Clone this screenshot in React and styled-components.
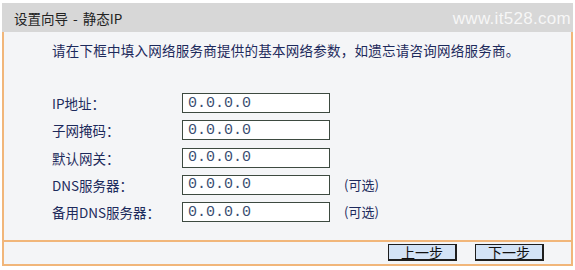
import { Fragment } from "react";
import styled, { createGlobalStyle } from "styled-components";

const GlobalStyle = createGlobalStyle`
  html, body {
    margin: 0;
    padding: 0;
    background: #ffffff;
  }
  body {
    font-family: "Noto Sans CJK SC", "Liberation Sans", sans-serif;
  }
`;

const Frame = styled.div`
  width: 571px;
  margin: 3px 0 0 2px;
`;

const Header = styled.div`
  height: 29px;
  background: #d7d7d7;
  display: flex;
  align-items: center;
  justify-content: space-between;
  padding: 0 2px 0 12px;
`;

const Title = styled.div`
  font-size: 13.5px;
  color: #222;
  line-height: 16px;
  word-spacing: 2px;
`;

const Watermark = styled.div`
  font-family: "Liberation Sans", Arial, sans-serif;
  font-size: 17px;
  color: #f6f6f6;
  letter-spacing: 0.3px;
  margin-top: 3px;
`;

const Body = styled.div`
  background: #f4f5f7;
  border: 2px solid #f1b67a;
  border-top: none;
`;

const Content = styled.div`
  height: 208px;
  padding: 10px 0 0 48px;
  box-sizing: border-box;
`;

const Intro = styled.div`
  font-size: 13.5px;
  line-height: 16px;
  letter-spacing: 0.25px;
  color: #1d2a5c;
`;

const Form = styled.div`
  display: grid;
  grid-template-columns: 130px 148px auto;
  grid-auto-rows: 20px;
  row-gap: 7.3px;
  align-items: center;
  margin-top: 35px;
`;

const Label = styled.div`
  font-size: 13.5px;
  color: #1d2a5c;
  line-height: 16px;
`;

const Field = styled.input`
  box-sizing: border-box;
  width: 148px;
  height: 20px;
  border: 1px solid #3d4a40;
  background: #ffffff;
  padding: 0 0 0 5px;
  font-family: "Liberation Mono", "DejaVu Sans Mono", monospace;
  font-size: 15px;
  color: #3b4d72;
  outline: none;
`;

const Hint = styled.div`
  font-size: 13px;
  color: #1d2a5c;
  padding-left: 14px;
  line-height: 16px;
`;

const Footer = styled.div`
  border-top: 2px solid #f1b67a;
  height: 24px;
  box-sizing: border-box;
  display: flex;
  justify-content: flex-end;
  gap: 18px;
  padding: 2px 27px 0 0;
`;

const Button = styled.button`
  width: 69px;
  height: 17px;
  padding: 0;
  background: #d3e3f6;
  border: 1px solid #1e1e1e;
  border-right-width: 2px;
  border-bottom-width: 2px;
  font-family: "Noto Sans CJK SC", sans-serif;
  font-size: 14px;
  line-height: 13px;
  color: #111;
`;

const rows = [
  { label: "IP地址：" },
  { label: "子网掩码：" },
  { label: "默认网关：" },
  { label: "DNS服务器：", optional: true },
  { label: "备用DNS服务器：", optional: true },
];

export default function App() {
  return (
    <>
      <GlobalStyle />
      <Frame>
        <Header>
          <Title>设置向导 - 静态IP</Title>
          <Watermark>www.it528.com</Watermark>
        </Header>
        <Body>
          <Content>
            <Intro>请在下框中填入网络服务商提供的基本网络参数，如遗忘请咨询网络服务商。</Intro>
            <Form>
              {rows.map((r) => (
                <Fragment key={r.label}>
                  <Label>{r.label}</Label>
                  <Field defaultValue="0.0.0.0" />
                  {r.optional ? <Hint>(可选)</Hint> : <span />}
                </Fragment>
              ))}
            </Form>
          </Content>
          <Footer>
            <Button>上一步</Button>
            <Button>下一步</Button>
          </Footer>
        </Body>
      </Frame>
    </>
  );
}
